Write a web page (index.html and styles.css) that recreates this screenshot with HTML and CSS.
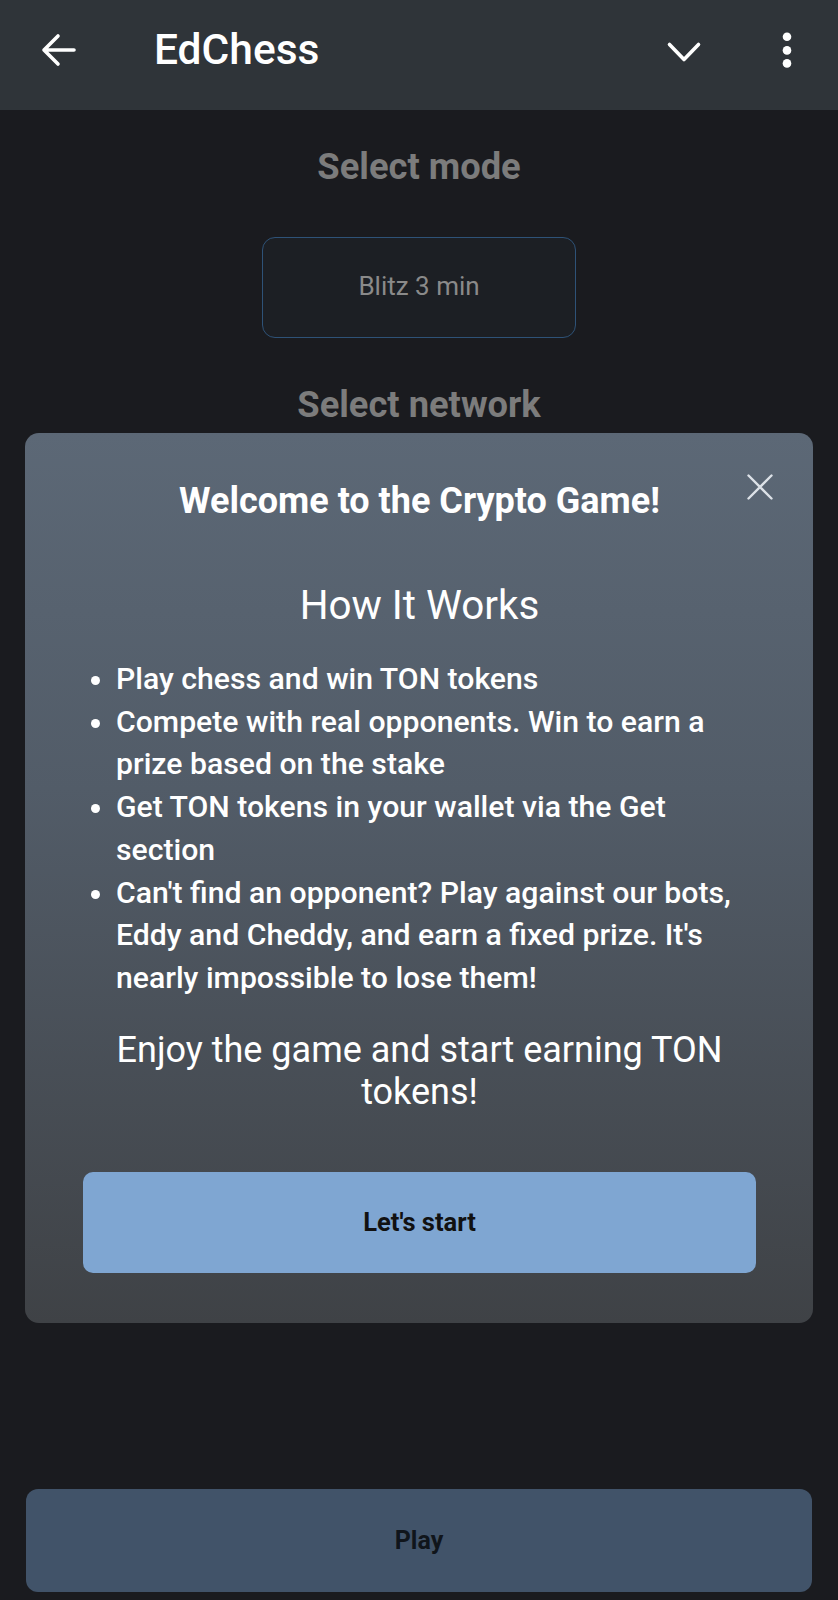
FILE: index.html
```html
<!DOCTYPE html>
<html lang="en">
<head>
<meta charset="utf-8">
<title>EdChess</title>
<link rel="stylesheet" href="styles.css">
</head>
<body>
<div class="page">
  <header class="topbar">
    <svg class="icon-back" width="36" height="36" viewBox="0 0 36 36">
      <path d="M3 18 H33 M17 4 L3 18 L17 32" fill="none" stroke="#fff" stroke-width="3.6" stroke-linecap="round" stroke-linejoin="round"/>
    </svg>
    <div class="app-title">EdChess</div>
    <div class="spacer"></div>
    <svg class="icon-chevron" width="40" height="40" viewBox="0 0 40 40">
      <path d="M5.5 14.5 L20 29.5 L34.5 14.5" fill="none" stroke="#fff" stroke-width="3.6" stroke-linecap="round" stroke-linejoin="round"/>
    </svg>
    <svg class="icon-more" width="16" height="40" viewBox="0 0 16 40">
      <circle cx="8" cy="6.8" r="4.3" fill="#fff"/>
      <circle cx="8" cy="20.4" r="4.3" fill="#fff"/>
      <circle cx="8" cy="33.4" r="4.3" fill="#fff"/>
    </svg>
  </header>

  <main class="content">
    <h2 class="section-title mode-title">Select mode</h2>
    <div class="mode-box">Blitz 3 min</div>
    <h2 class="section-title network-title">Select network</h2>
  </main>

  <div class="play-wrap">
    <button class="play-btn">Play</button>
  </div>

  <div class="modal">
    <button class="modal-close" aria-label="Close">
      <svg width="26" height="26" viewBox="0 0 26 26">
        <path d="M1.5 1.5 L24.5 24.5 M24.5 1.5 L1.5 24.5" fill="none" stroke="#dde2e8" stroke-width="2.4" stroke-linecap="round"/>
      </svg>
    </button>
    <h3 class="modal-title">Welcome to the Crypto Game!</h3>
    <h4 class="modal-subtitle">How It Works</h4>
    <ul class="modal-list">
      <li>Play chess and win TON tokens</li>
      <li>Compete with real opponents. Win to earn a prize based on the stake</li>
      <li>Get TON tokens in your wallet via the Get section</li>
      <li>Can't find an opponent? Play against our bots, Eddy and Cheddy, and earn a fixed prize. It's nearly impossible to lose them!</li>
    </ul>
    <p class="modal-enjoy">Enjoy the game and start earning TON tokens!</p>
    <button class="start-btn">Let's start</button>
  </div>
</div>
</body>
</html>
```

FILE: styles.css
```css
* { box-sizing: border-box; }

html, body {
  margin: 0;
  padding: 0;
  background: #1a1b1f;
}

body {
  font-family: Roboto, "Liberation Sans", Arial, sans-serif;
  color: #fff;
}

.page {
  position: relative;
  width: 838px;
  height: 1600px;
  display: flex;
  flex-direction: column;
  overflow: hidden;
}

.topbar {
  height: 110px;
  flex: none;
  background: #2f3439;
  display: flex;
  align-items: center;
  padding: 0 43px 10px 41px;
}

.icon-back { display: block; flex: none; }

.app-title {
  margin-left: 77px;
  font-size: 42.5px;
  font-weight: 500;
  line-height: 50px;
  color: #fff;
}

.spacer { flex: 1; }

.icon-chevron { display: block; flex: none; }
.icon-more { display: block; flex: none; margin-left: 75px; }

.content {
  display: flex;
  flex-direction: column;
  align-items: center;
}

.section-title {
  margin: 0;
  font-size: 36.3px;
  font-weight: 700;
  line-height: 42px;
  color: #7c7c7c;
}

.mode-title { margin-top: 36px; }

.mode-box {
  margin-top: 49px;
  width: 314px;
  height: 101px;
  border: 1.5px solid #2e5277;
  border-radius: 13px;
  background: #1c1f24;
  display: flex;
  align-items: center;
  justify-content: center;
  padding-bottom: 3px;
  font-size: 26px;
  color: #8a8a8a;
}

.network-title { margin-top: 46px; }

.play-wrap {
  margin-top: auto;
  padding: 0 26px 8px 26px;
}

.play-btn {
  width: 100%;
  height: 103px;
  border: none;
  border-radius: 12px;
  background: #415369;
  font-family: inherit;
  font-size: 25px;
  font-weight: 700;
  color: #10151b;
}

.modal {
  position: absolute;
  left: 25px;
  top: 433px;
  width: 788px;
  height: 890px;
  border-radius: 14px;
  background: linear-gradient(180deg, #5c6876 0%, #525c68 40%, #3f4246 100%);
  padding: 48px 57px 50px 58px;
  display: flex;
  flex-direction: column;
  align-items: stretch;
}

.modal-close {
  position: absolute;
  left: 722px;
  top: 41px;
  width: 26px;
  height: 26px;
  padding: 0;
  border: none;
  background: none;
}
.modal-close svg { display: block; }

.modal-title {
  margin: 0;
  text-align: center;
  font-size: 36px;
  font-weight: 700;
  line-height: 40px;
  color: #fff;
}

.modal-subtitle {
  margin: 62px 0 0 0;
  text-align: center;
  font-size: 40.4px;
  font-weight: 400;
  line-height: 46px;
  color: #fff;
}

.modal-list {
  margin: 29px 0 0 0;
  padding: 0 20px 0 33px;
  font-size: 30.2px;
  font-weight: 500;
  line-height: 42.7px;
  color: #fff;
}

.modal-enjoy {
  margin: 29px 0 0 0;
  text-align: center;
  font-size: 36px;
  font-weight: 400;
  line-height: 42px;
  color: #fff;
}

.start-btn {
  margin-top: 59px;
  height: 101px;
  border: none;
  border-radius: 10px;
  background: #7fa6d2;
  font-family: inherit;
  font-size: 25.5px;
  font-weight: 700;
  color: #111;
}
```
